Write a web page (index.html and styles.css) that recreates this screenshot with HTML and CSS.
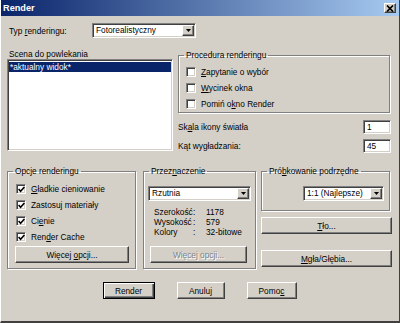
FILE: index.html
```html
<!DOCTYPE html>
<html lang="pl">
<head>
    <meta charset="UTF-8">
    <title>Render</title>
    <link rel="stylesheet" href="styles.css">
</head>
<body>
    <div class="window">
        <div class="titlebar">
            <span class="title">Render</span>
            <span class="close">
                <svg width="8" height="7" viewBox="0 0 8 7"><path d="M1 0.5 L7 6.5 M7 0.5 L1 6.5" stroke="#000" stroke-width="1.7"/></svg>
            </span>
        </div>

        <div class="content">
            <div class="type-row">
                <span class="type-label">Typ <u>r</u>enderingu:</span>
                <div class="combo combo-type">
                    <span class="combo-text">Fotorealistyczny</span>
                    <span class="combo-btn"><svg width="5" height="3" viewBox="0 0 5 3"><polygon points="0,0 5,0 2.5,3" fill="#000"/></svg></span>
                </div>
            </div>

            <div class="top">
                <div class="scene">
                    <div class="scene-label">Scena do powlekania</div>
                    <div class="listbox">
                        <div class="list-item selected">*aktualny widok*</div>
                    </div>
                </div>

                <div class="top-right">
                    <fieldset class="group group-proc">
                        <legend>Procedura renderingu</legend>
                        <div class="group-body">
                            <label class="check"><span class="box"></span><span><u>Z</u>apytanie o wybór</span></label>
                            <label class="check"><span class="box"></span><span><u>W</u>ycinek okna</span></label>
                            <label class="check"><span class="box"></span><span>Pomiń o<u>k</u>no Render</span></label>
                        </div>
                    </fieldset>
                    <div class="field-row first">
                        <span>Sk<u>a</u>la ikony światła</span>
                        <div class="textbox">1</div>
                    </div>
                    <div class="field-row">
                        <span>Kąt wygładzania:</span>
                        <div class="textbox">45</div>
                    </div>
                </div>
            </div>

            <div class="middle">
                <fieldset class="group group-opts">
                    <legend>Opcje renderingu</legend>
                    <div class="group-body">
                        <label class="check"><span class="box checked"><svg width="7" height="7" viewBox="0 0 7 7"><path d="M0.6 3 L2.6 5.2 L6.4 1" fill="none" stroke="#000" stroke-width="1.6"/></svg></span><span><u>G</u>ładkie cieniowanie</span></label>
                        <label class="check"><span class="box checked"><svg width="7" height="7" viewBox="0 0 7 7"><path d="M0.6 3 L2.6 5.2 L6.4 1" fill="none" stroke="#000" stroke-width="1.6"/></svg></span><span>Zastosu<u>j</u> materiały</span></label>
                        <label class="check"><span class="box checked"><svg width="7" height="7" viewBox="0 0 7 7"><path d="M0.6 3 L2.6 5.2 L6.4 1" fill="none" stroke="#000" stroke-width="1.6"/></svg></span><span>Ci<u>e</u>nie</span></label>
                        <label class="check"><span class="box checked"><svg width="7" height="7" viewBox="0 0 7 7"><path d="M0.6 3 L2.6 5.2 L6.4 1" fill="none" stroke="#000" stroke-width="1.6"/></svg></span><span>Ren<u>d</u>er Cache</span></label>
                        <button class="btn btn-opts">Więcej <u>o</u>pcji...</button>
                    </div>
                </fieldset>

                <fieldset class="group group-dest">
                    <legend>Przez<u>n</u>aczenie</legend>
                    <div class="group-body">
                        <div class="combo combo-dest">
                            <span class="combo-text">Rzutnia</span>
                            <span class="combo-btn"><svg width="5" height="3" viewBox="0 0 5 3"><polygon points="0,0 5,0 2.5,3" fill="#000"/></svg></span>
                        </div>
                        <div class="info">
                            <span>Szerokość</span><span>:</span><span>1178</span>
                            <span>Wysokość</span><span>:</span><span>579</span>
                            <span>Kolory</span><span>:</span><span>32-bitowe</span>
                        </div>
                        <button class="btn btn-disabled" disabled>Więcej opcji...</button>
                    </div>
                </fieldset>

                <div class="right-col">
                    <fieldset class="group group-sample">
                        <legend>Pró<u>b</u>kowanie podrzędne</legend>
                        <div class="group-body">
                            <div class="combo combo-sample">
                                <span class="combo-text">1:1 (Najlepsze)</span>
                                <span class="combo-btn"><svg width="5" height="3" viewBox="0 0 5 3"><polygon points="0,0 5,0 2.5,3" fill="#000"/></svg></span>
                            </div>
                        </div>
                    </fieldset>
                    <button class="btn btn-wide btn-bg"><u>T</u>ło...</button>
                    <button class="btn btn-wide btn-fog"><u>M</u>gła/Głębia...</button>
                </div>
            </div>

            <div class="actions">
                <button class="btn btn-default btn-render">Render</button>
                <button class="btn btn-cancel">Anuluj</button>
                <button class="btn btn-help">Pomo<u>c</u></button>
            </div>
        </div>
    </div>
</body>
</html>
```

FILE: styles.css
```css
* {
    box-sizing: border-box;
}

body {
    margin: 0;
    background-color: #d4d0c8;
    font-family: "Liberation Sans", Arial, sans-serif;
    font-size: 8.3px;
    line-height: 10px;
    color: #000;
}

u {
    text-underline-offset: 1px;
}

.window {
    width: 400px;
    height: 323px;
    border-left: 1px solid #fff;
    border-right: 1px solid #404040;
    border-bottom: 2px solid #404040;
}

/* title bar */
.titlebar {
    height: 16px;
    display: flex;
    align-items: center;
    justify-content: space-between;
    padding: 0 3px 0 2px;
    background: linear-gradient(to right, #0a246a, #a6caf0);
}

.title {
    color: #fff;
    font-weight: bold;
    font-size: 9.2px;
}

.close {
    width: 12px;
    height: 10px;
    display: flex;
    align-items: center;
    justify-content: center;
    background-color: #d4d0c8;
    border: 1px solid;
    border-color: #fff #404040 #404040 #fff;
    box-shadow: inset -1px -1px 0 #808080;
}

.content {
    padding: 7px 7px 0 6px;
}

/* sunken controls */
.combo, .listbox, .textbox {
    background-color: #fff;
    border: 1px solid;
    border-color: #808080 #fff #fff #808080;
    box-shadow: inset 1px 1px 0 #404040, inset -1px -1px 0 #d4d0c8;
}

.combo {
    display: flex;
    align-items: stretch;
    height: 15px;
    padding: 1px;
}

.combo-text {
    flex: 1;
    padding-left: 2px;
    line-height: 11px;
    white-space: nowrap;
}

.combo-btn {
    width: 12px;
    display: flex;
    align-items: center;
    justify-content: center;
    background-color: #d4d0c8;
    border: 1px solid;
    border-color: #fff #404040 #404040 #fff;
    box-shadow: inset -1px -1px 0 #808080;
}

.type-row {
    display: flex;
    align-items: center;
    height: 15px;
}

.type-label {
    width: 85px;
    padding-left: 2px;
}

.combo-type {
    width: 104px;
}

/* top section */
.top {
    display: flex;
    gap: 5px;
    margin-top: 11px;
}

.scene {
    width: 166px;
}

.scene-label {
    height: 10px;
    padding-left: 2px;
}

.listbox {
    height: 92px;
    padding: 2px 1px;
}

.list-item {
    height: 10px;
    padding-left: 1px;
    white-space: nowrap;
}

.list-item.selected {
    background-color: #0a246a;
    color: #fff;
}

.top-right {
    flex: 1;
    padding-top: 1px;
}

/* group boxes */
.group {
    margin: 0;
    padding: 0;
    min-width: 0;
    border: 1px solid #808080;
    box-shadow: 1px 1px 0 #fff, inset 1px 1px 0 #fff;
}

.group legend {
    margin-left: 5px;
    padding: 0 2px;
    line-height: 10px;
}

.group-proc {
    margin-right: 2px;
}

.group-proc .group-body {
    padding: 4px 0 0 7px;
}

.check {
    display: flex;
    align-items: center;
    gap: 5px;
    height: 16px;
    white-space: nowrap;
}

.box {
    width: 10px;
    height: 10px;
    display: flex;
    align-items: center;
    justify-content: center;
    background-color: #fff;
    border: 1px solid;
    border-color: #808080 #fff #fff #808080;
    box-shadow: inset 1px 1px 0 #404040, inset -1px -1px 0 #d4d0c8;
}

.field-row {
    display: flex;
    align-items: center;
    justify-content: space-between;
    height: 14px;
    margin-top: 5px;
    margin-right: 1px;
}

.field-row.first {
    margin-top: 7px;
}

.textbox {
    width: 28px;
    height: 14px;
    padding: 1px 3px;
    line-height: 10px;
}

/* middle section */
.middle {
    display: flex;
    align-items: stretch;
    margin-top: 13px;
}

.group-opts {
    width: 129px;
}

.group-opts .group-body {
    padding: 5px 6px 5px 7px;
}

.group-opts .check {
    padding-left: 1px;
}

.btn {
    display: block;
    height: 17px;
    padding: 0;
    font-family: inherit;
    font-size: inherit;
    line-height: 14px;
    text-align: center;
    color: #000;
    background-color: #d4d0c8;
    border: 1px solid;
    border-color: #fff #404040 #404040 #fff;
    box-shadow: inset -1px -1px 0 #808080;
    white-space: nowrap;
}

.btn-opts {
    width: 114px;
    margin-top: 1px;
}

.group-dest {
    width: 113px;
    margin-left: 7px;
}

.group-dest .group-body {
    padding: 10px 4px 0 4px;
}

.combo-dest {
    width: 103px;
}

.info {
    display: grid;
    grid-template-columns: 39px 13px auto;
    margin: 6px 0 0 6px;
    line-height: 10px;
}

.btn-disabled {
    width: 97px;
    margin: 9px 0 0 2px;
    color: #808080;
    text-shadow: 1px 1px 0 #fff;
}

.right-col {
    width: 131px;
    margin-left: 5px;
}

.group-sample {
    margin-right: 2px;
}

.group-sample .group-body {
    display: flex;
    justify-content: flex-end;
    padding: 10px 5px 9px 0;
}

.combo-sample {
    width: 81px;
}

.btn-wide {
    width: 131px;
}

.btn-bg {
    margin-top: 6px;
}

.btn-fog {
    margin-top: 16px;
}

/* bottom buttons */
.actions {
    display: flex;
    justify-content: center;
    gap: 22px;
    margin-top: 13px;
}

.btn-default {
    border-color: #000;
    box-shadow: inset 1px 1px 0 #fff, inset -1px -1px 0 #404040, inset -2px -2px 0 #808080;
}

.btn-render {
    width: 52px;
}

.btn-cancel {
    width: 48px;
}

.btn-help {
    width: 50px;
}
```
